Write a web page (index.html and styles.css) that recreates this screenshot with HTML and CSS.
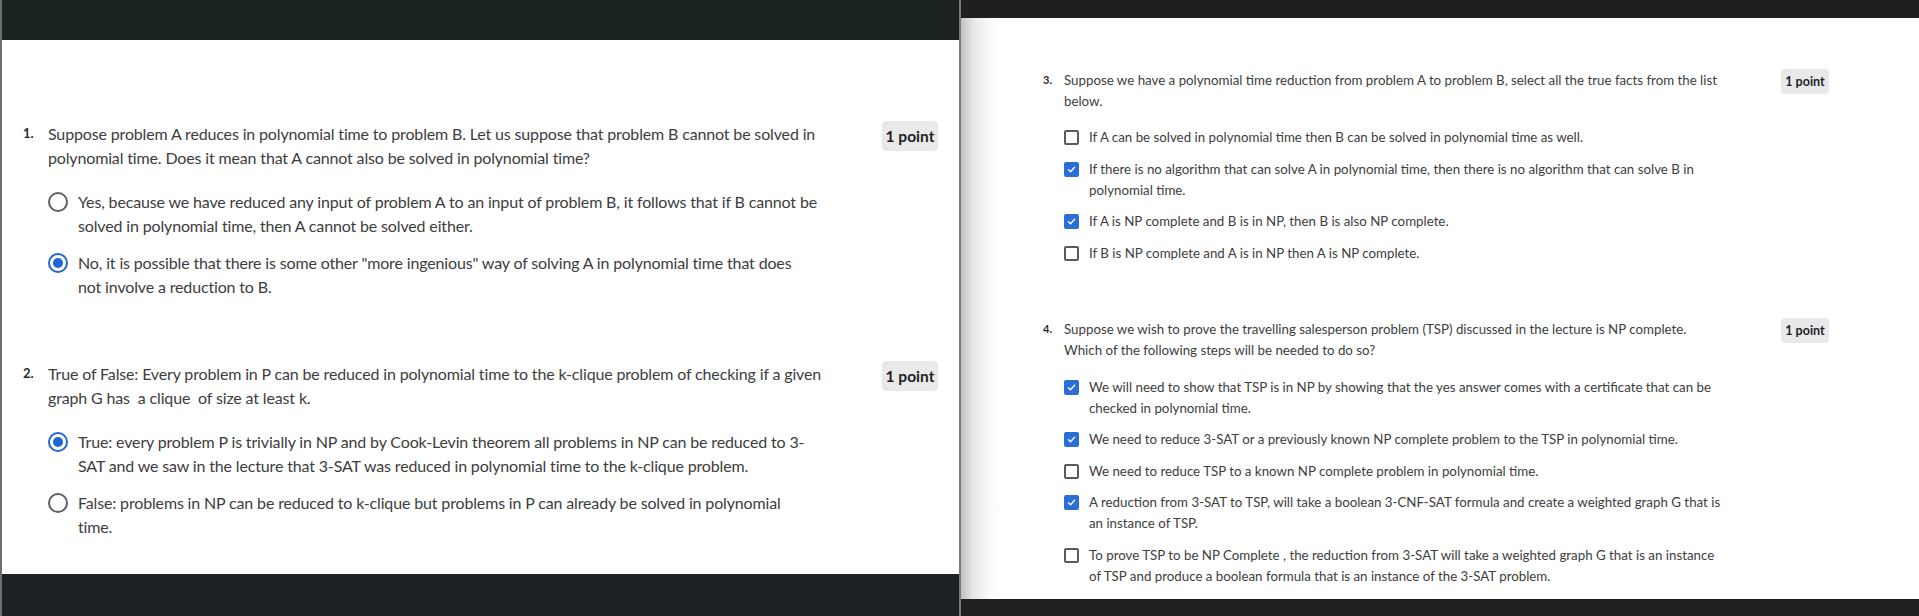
FILE: index.html
```
<!DOCTYPE html>
<html>
<head>
<meta charset="utf-8">
<link rel="stylesheet" href="styles.css">
</head>
<body>
<div class="screen">
  <section class="panel panel-left">
    <div class="bar bar-top-l"></div>
    <div class="content content-l">
      <div class="q q-l q1">
        <div class="num">1.</div>
        <div class="body">
          <div class="prompt">Suppose problem A reduces in polynomial time to problem B. Let us suppose that problem B cannot be solved in<br>polynomial time. Does it mean that A cannot also be solved in polynomial time?</div>
          <ul class="opts">
            <li class="opt"><span class="radio"></span><span class="txt">Yes, because we have reduced any input of problem A to an input of problem B, it follows that if B cannot be<br>solved in polynomial time, then A cannot be solved either.</span></li>
            <li class="opt"><span class="radio on"></span><span class="txt">No, it is possible that there is some other "more ingenious" way of solving A in polynomial time that does<br>not involve a reduction to B.</span></li>
          </ul>
        </div>
        <div class="badge">1 point</div>
      </div>
      <div class="q q-l q2">
        <div class="num">2.</div>
        <div class="body">
          <div class="prompt">True of False: Every problem in P can be reduced in polynomial time to the k-clique problem of checking if a given<br>graph G has &nbsp;a clique &nbsp;of size at least k.</div>
          <ul class="opts">
            <li class="opt"><span class="radio on"></span><span class="txt">True: every problem P is trivially in NP and by Cook-Levin theorem all problems in NP can be reduced to 3-<br>SAT and we saw in the lecture that 3-SAT was reduced in polynomial time to the k-clique problem.</span></li>
            <li class="opt"><span class="radio"></span><span class="txt">False: problems in NP can be reduced to k-clique but problems in P can already be solved in polynomial<br>time.</span></li>
          </ul>
        </div>
        <div class="badge">1 point</div>
      </div>
    </div>
    <div class="bar bar-bot-l"></div>
  </section>
  <div class="divider"></div>
  <section class="panel panel-right">
    <div class="bar bar-top-r"></div>
    <div class="content content-r">
      <div class="q q-r q3">
        <div class="num">3.</div>
        <div class="body">
          <div class="prompt">Suppose we have a polynomial time reduction from problem A to problem B, select all the true facts from the list<br>below.</div>
          <ul class="opts">
            <li class="opt"><span class="cb"></span><span class="txt">If A can be solved in polynomial time then B can be solved in polynomial time as well.</span></li>
            <li class="opt"><span class="cb on"><svg viewBox="0 0 16 16"><path d="M3.5 8.2l3 3 6-6.4"/></svg></span><span class="txt">If there is no algorithm that can solve A in polynomial time, then there is no algorithm that can solve B in<br>polynomial time.</span></li>
            <li class="opt"><span class="cb on"><svg viewBox="0 0 16 16"><path d="M3.5 8.2l3 3 6-6.4"/></svg></span><span class="txt">If A is NP complete and B is in NP, then B is also NP complete.</span></li>
            <li class="opt"><span class="cb"></span><span class="txt">If B is NP complete and A is in NP then A is NP complete.</span></li>
          </ul>
        </div>
        <div class="badge">1 point</div>
      </div>
      <div class="q q-r q4">
        <div class="num">4.</div>
        <div class="body">
          <div class="prompt">Suppose we wish to prove the travelling salesperson problem (TSP) discussed in the lecture is NP complete.<br>Which of the following steps will be needed to do so?</div>
          <ul class="opts">
            <li class="opt"><span class="cb on"><svg viewBox="0 0 16 16"><path d="M3.5 8.2l3 3 6-6.4"/></svg></span><span class="txt">We will need to show that TSP is in NP by showing that the yes answer comes with a certificate that can be<br>checked in polynomial time.</span></li>
            <li class="opt"><span class="cb on"><svg viewBox="0 0 16 16"><path d="M3.5 8.2l3 3 6-6.4"/></svg></span><span class="txt">We need to reduce 3-SAT or a previously known NP complete problem to the TSP in polynomial time.</span></li>
            <li class="opt"><span class="cb"></span><span class="txt">We need to reduce TSP to a known NP complete problem in polynomial time.</span></li>
            <li class="opt"><span class="cb on"><svg viewBox="0 0 16 16"><path d="M3.5 8.2l3 3 6-6.4"/></svg></span><span class="txt">A reduction from 3-SAT to TSP, will take a boolean 3-CNF-SAT formula and create a weighted graph G that is<br>an instance of TSP.</span></li>
            <li class="opt"><span class="cb"></span><span class="txt">To prove TSP to be NP Complete , the reduction from 3-SAT will take a weighted graph G that is an instance<br>of TSP and produce a boolean formula that is an instance of the 3-SAT problem.</span></li>
          </ul>
        </div>
        <div class="badge">1 point</div>
      </div>
    </div>
    <div class="bar bar-bot-r"></div>
  </section>
</div>
</body>
</html>
```
FILE: styles.css
```
* { box-sizing: border-box; }
html, body { margin: 0; padding: 0; }
body {
  width: 1919px;
  height: 616px;
  overflow: hidden;
  background: #fff;
  font-family: Lato, "Noto Sans", sans-serif;
  color: #3d3d3d;
}
.screen {
  display: flex;
  height: 616px;
}
.panel {
  display: flex;
  flex-direction: column;
  height: 616px;
}
.panel-left {
  width: 959px;
  border-left: 2px solid #6e6e6e;
}
.divider {
  width: 2px;
  background: #7a7a7a;
}
.panel-right {
  width: 958px;
}
.bar-top-l { height: 40px; background: #1b2320; }
.bar-bot-l { height: 42px; background: #1f2224; }
.bar-top-r { height: 18px; background: #1f1f1f; }
.bar-bot-r { height: 17px; background: #202020; }
.content { flex: 1; background: #fff; }
.content-l { padding: 82px 21px 0 21px; }
.content-r {
  padding: 52px 90px 0 82px;
  background: linear-gradient(to right, #c2c2c2 0, #e6e6e6 12px, #fbfbfb 30px, #fff 42px);
}

.q { display: flex; align-items: flex-start; }
.body { flex: 1; }
.opts { list-style: none; margin: 0; padding: 0; }
.opt { display: flex; align-items: flex-start; }
.num { font-weight: 700; color: #2a2a2a; }
.badge {
  background: #e8e9eb;
  border-radius: 4px;
  font-weight: 700;
  color: #1f1f1f;
  white-space: nowrap;
  text-align: center;
}

/* left */
.q-l { font-size: 16px; line-height: 24px; letter-spacing: -0.15px; }
.q-l .num { width: 25px; font-size: 13px; line-height: 22px; letter-spacing: 0; }
.q-l .opts { margin-top: 20px; display: flex; flex-direction: column; gap: 13px; }
.q-l .txt { margin-left: 10px; }
.q-l .badge { width: 56px; height: 30px; line-height: 30px; font-size: 15.5px; margin-top: -1px; letter-spacing: 0; }
.q2 { margin-top: 63px; }
.radio {
  flex: none;
  width: 20px;
  height: 20px;
  margin-top: 2px;
  border: 2px solid #5f5f5f;
  border-radius: 50%;
  position: relative;
}
.radio.on { border-color: #1f66d4; }
.radio.on::after {
  content: "";
  position: absolute;
  left: 3px; top: 3px;
  width: 10px; height: 10px;
  border-radius: 50%;
  background: #1f66d4;
}

/* right */
.q-r { font-size: 13.3px; line-height: 21px; }
.q-r .num { width: 21px; font-size: 11px; line-height: 20px; }
.q-r .opts { margin-top: 15px; display: flex; flex-direction: column; gap: 10.5px; }
.q-r .txt { margin-left: 10px; }
.q-r .badge { width: 48px; height: 25px; line-height: 25px; font-size: 12.5px; margin-top: -1px; }
.q4 { margin-top: 55px; }
.q4 .opts { margin-top: 16px; }
.cb {
  flex: none;
  width: 15px;
  height: 15px;
  margin-top: 3px;
  border: 2px solid #5b5b5b;
  border-radius: 2px;
  display: flex;
}
.cb.on { background: #2b6fd6; border-color: #2b6fd6; }
.cb svg { width: 100%; height: 100%; }
.cb svg path { fill: none; stroke: #fff; stroke-width: 2; stroke-linecap: round; stroke-linejoin: round; }
```
